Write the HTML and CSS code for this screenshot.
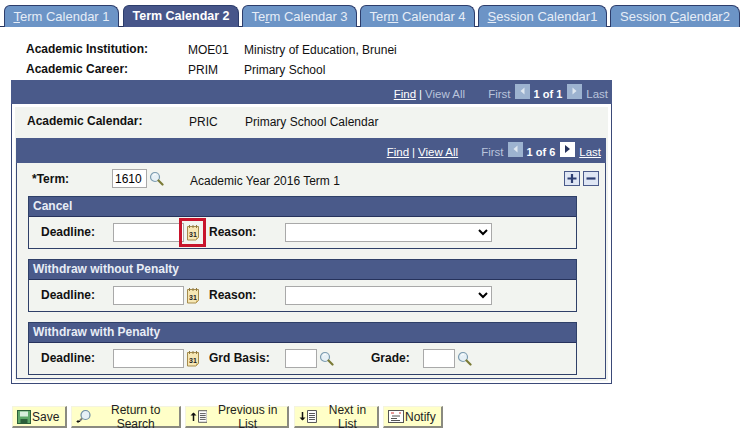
FILE: index.html
```html
<!DOCTYPE html>
<html lang="en">
<head>
    <meta charset="UTF-8">
    <meta name="viewport" content="width=device-width, initial-scale=1.0">
    <title>Term Calendar 2</title>
    <link rel="stylesheet" href="styles.css">
</head>
<body>
    <svg class="defs" width="0" height="0">
        <symbol id="ico-search" viewBox="0 0 15 15">
            <circle cx="6" cy="6" r="4.5" fill="#e6f0f6" stroke="#7d9cb0" stroke-width="1.2"/>
            <path d="M4 4.5a3 3 0 0 1 3-1.2" fill="none" stroke="#fff" stroke-width="1"/>
            <path d="M9.5 9.5l4 4" stroke="#7a7a35" stroke-width="2.2" stroke-linecap="round"/>
        </symbol>
        <symbol id="ico-cal" viewBox="0 0 14 17">
            <path d="M1.5 2.5h11v11l-2.5 2.5h-8.500z" fill="#f6e7b4" stroke="#a58b4c"/>
            <path d="M3.500 1v3M7 1v3M10.500 1v3" stroke="#8f7a42"/>
            <path d="M12.500 13.500l-2.500 2.500v-2.500z" fill="#c9ab62"/>
            <text x="7" y="12.500" text-anchor="middle" class="cal-num">31</text>
        </symbol>
        <symbol id="ico-list" viewBox="0 0 10 13">
            <path d="M.5.500h9v12h-9z" fill="#fff" stroke="#555"/>
            <path d="M2 3.500h6M2 5.500h6M2 7.500h6M2 9.500h6" stroke="#555"/>
        </symbol>
    </svg>

    <div class="tabs">
        <a class="tab t1"><u>T</u>erm Calendar 1</a>
        <a class="tab t2 active">Term Calendar 2</a>
        <a class="tab t3">Te<u>r</u>m Calendar 3</a>
        <a class="tab t4">Ter<u>m</u> Calendar 4</a>
        <a class="tab t5"><u>S</u>ession Calendar1</a>
        <a class="tab t6">Session <u>C</u>alendar2</a>
    </div>

    <div class="info">
        <div class="info-row"><b>Academic Institution:</b><span class="code">MOE01</span><span>Ministry of Education, Brunei</span></div>
        <div class="info-row"><b>Academic Career:</b><span class="code">PRIM</span><span>Primary School</span></div>
    </div>

    <div class="outer">
        <div class="nav-bar">
            <a class="link">Find</a><span class="sep">|</span><span class="off">View All</span>
            <span class="off first">First</span>
            <svg class="arrow" width="15" height="15"><rect width="15" height="15" fill="#9db3d0"/><path d="M9.500 3.500v7l-4-3.500z" fill="#dfe7f0"/></svg>
            <b class="count">1 of 1</b>
            <svg class="arrow" width="15" height="15"><rect width="15" height="15" fill="#9db3d0"/><path d="M5.500 3.500v7l4-3.500z" fill="#dfe7f0"/></svg>
            <span class="off">Last</span>
        </div>

        <div class="panel">
            <div class="info-row cal-row"><b>Academic Calendar:</b><span class="code">PRIC</span><span>Primary School Calendar</span></div>

            <div class="inner">
                <div class="nav-bar">
                    <a class="link">Find</a><span class="sep">|</span><a class="link">View All</a>
                    <span class="off first">First</span>
                    <svg class="arrow" width="15" height="15"><rect width="15" height="15" fill="#9db3d0"/><path d="M9.500 3.500v7l-4-3.500z" fill="#dfe7f0"/></svg>
                    <b class="count">1 of 6</b>
                    <svg class="arrow" width="15" height="15"><rect width="15" height="15" fill="#fff"/><path d="M5 3v8l5-4z" fill="#26325c"/></svg>
                    <a class="link">Last</a>
                </div>

                <div class="term-row">
                    <b class="term-label">*Term:</b>
                    <input class="field term-field" type="text" value="1610">
                    <svg class="ico"><use href="#ico-search"/></svg>
                    <span class="term-desc">Academic Year 2016 Term 1</span>
                    <span class="row-btns">
                        <svg width="16" height="15"><rect x=".5" y=".5" width="15" height="14" fill="#dfe6f4" stroke="#4a5a8a"/><path d="M8 3v9M3.500 7.500h9" stroke="#2e3f73" stroke-width="2.200"/></svg>
                        <svg width="16" height="15"><rect x=".5" y=".5" width="15" height="14" fill="#dfe6f4" stroke="#4a5a8a"/><path d="M3.500 7.500h9" stroke="#2e3f73" stroke-width="2.200"/></svg>
                    </span>
                </div>

                <section class="group">
                    <h2>Cancel</h2>
                    <div class="group-row">
                        <b class="lbl">Deadline:</b>
                        <input class="field date" type="text">
                        <span class="cal-cell">
                            <svg class="ico-cal"><use href="#ico-cal"/></svg>
                            <span class="highlight"></span>
                        </span>
                        <b class="lbl2">Reason:</b>
                        <select class="field reason"></select>
                    </div>
                </section>

                <section class="group">
                    <h2>Withdraw without Penalty</h2>
                    <div class="group-row">
                        <b class="lbl">Deadline:</b>
                        <input class="field date" type="text">
                        <span class="cal-cell"><svg class="ico-cal"><use href="#ico-cal"/></svg></span>
                        <b class="lbl2">Reason:</b>
                        <select class="field reason"></select>
                    </div>
                </section>

                <section class="group">
                    <h2>Withdraw with Penalty</h2>
                    <div class="group-row">
                        <b class="lbl">Deadline:</b>
                        <input class="field date" type="text">
                        <span class="cal-cell"><svg class="ico-cal"><use href="#ico-cal"/></svg></span>
                        <b class="lbl2">Grd Basis:</b>
                        <input class="field short" type="text">
                        <svg class="ico"><use href="#ico-search"/></svg>
                        <b class="lbl3">Grade:</b>
                        <input class="field short" type="text">
                        <svg class="ico"><use href="#ico-search"/></svg>
                    </div>
                </section>
            </div>
        </div>
    </div>

    <div class="toolbar">
        <button class="btn b-save">
            <svg width="14" height="14"><rect x=".5" y=".5" width="13" height="13" fill="#5fa86a" stroke="#2c5f3a"/><rect x="3" y="1.500" width="8" height="5" fill="#d9eedd"/><rect x="3.500" y="9" width="7" height="4" fill="#2c5f3a"/></svg>Save
        </button>
        <button class="btn b-return">
            <svg width="16" height="15"><circle cx="9.500" cy="6" r="4.500" fill="#e6f0f6" stroke="#6d8da3" stroke-width="1.200"/><path d="M6 9.500l-2.500 2.500" stroke="#777" stroke-width="1.800"/><path d="M1 12.500h3M2.500 11l-1.500 1.500 1.500 1.500" fill="none" stroke="#111"/></svg>Return to Search
        </button>
        <button class="btn b-prev">
            <svg width="7" height="13"><path d="M3.500 3v8" stroke="#111" stroke-width="1.500"/><path d="M.5 5.500l3-3 3 3z" fill="#111"/></svg>
            <svg width="10" height="13"><use href="#ico-list"/></svg>Previous in List
        </button>
        <button class="btn b-next">
            <svg width="7" height="13"><path d="M3.500 2v8" stroke="#111" stroke-width="1.500"/><path d="M.5 7.500l3 3 3-3z" fill="#111"/></svg>
            <svg width="10" height="13"><use href="#ico-list"/></svg>Next in List
        </button>
        <button class="btn b-notify">
            <svg width="16" height="13"><rect x=".5" y=".5" width="15" height="12" fill="#fff" stroke="#555"/><path d="M3 3h3M11 3h2" stroke="#c33"/><path d="M4 6h8M3 8.500h6M3 10.500h9" stroke="#555"/></svg>Notify
        </button>
    </div>
</body>
</html>
```

FILE: styles.css
```css
* {
    margin: 0;
    padding: 0;
    box-sizing: border-box;
}

body {
    font-family: "Liberation Sans", Arial, sans-serif;
    font-size: 12px;
    color: #111;
    background: #fff;
    width: 746px;
    height: 433px;
    overflow: hidden;
}

.defs {
    position: absolute;
}

.cal-num {
    font-family: "Liberation Sans", sans-serif;
    font-size: 7px;
    font-weight: bold;
    fill: #222;
}

/* tabs */
.tabs {
    display: flex;
    height: 27px;
    padding: 5px 0 0 4px;
    border-bottom: 1px solid #26325c;
    margin-right: 6px;
}

.tab {
    height: 22px;
    padding-top: 3px;
    text-align: center;
    font-size: 13px;
    color: #e6edf7;
    background: #6c94c6;
    border: 1px solid #2d3d6b;
    border-bottom: none;
    border-radius: 6px 8px 0 0;
}

.tab.active {
    color: #fff;
    font-weight: bold;
    font-size: 12.5px;
    background: #47568a;
}

.t1 { width: 115px; margin-right: 4px; }
.t2 { width: 116px; margin-right: 3px; }
.t3 { width: 115px; margin-right: 3px; }
.t4 { width: 115px; margin-right: 3px; }
.t5 { width: 129px; margin-right: 3px; }
.t6 { width: 130px; }

/* header info */
.info {
    padding: 16px 0 0 26px;
    height: 53px;
}

.info-row {
    display: flex;
    height: 20px;
    line-height: 15px;
}

.info-row b {
    width: 162px;
    margin-top: -1px;
}

.info-row .code {
    width: 56px;
}

/* panels */
.outer {
    width: 601px;
    height: 304px;
    margin-left: 11px;
    border: 1px solid #3b4a78;
    border-top: none;
}

.nav-bar {
    display: flex;
    align-items: center;
    justify-content: flex-end;
    height: 24px;
    padding: 3px 4px 0 0;
    background: #4a5a8a;
    color: #fff;
    font-size: 11.500px;
}

.outer > .nav-bar {
    margin: 0 -1px;
}

.link {
    color: #fff;
    text-decoration: underline;
}

.sep {
    margin: 0 3px;
}

.off {
    color: #b9c4dc;
}

.first {
    margin-left: 23px;
}

.arrow {
    margin: -5px 4px 0 4px;
}

.count {
    font-size: 11px;
    margin-right: 1px;
}

.panel {
    height: 274px;
    margin: 3px 3px 0 3px;
    padding-left: 1px;
    background: #f2f4f0;
}

.cal-row {
    height: 31px;
    padding: 8px 0 0 11px;
}

.cal-row b {
    width: 162px;
}

.inner {
    width: 590px;
    height: 241px;
    background: #f2f4f0;
    border: 1px solid #3b4a78;
    border-top: none;
}

.inner > .nav-bar {
    height: 25px;
    margin: 0 -1px;
    padding-right: 5px;
}

.term-row {
    display: flex;
    align-items: center;
    height: 19px;
    margin-top: 6px;
    padding-left: 15px;
    position: relative;
}

.term-label {
    width: 80px;
}

.field {
    height: 19px;
    border: 1px solid #a9a9a9;
    background: #fff;
    font: 12px "Liberation Sans", Arial, sans-serif;
}

.term-field {
    width: 35px;
    padding-left: 2px;
}

.ico {
    width: 15px;
    height: 15px;
    margin-left: 2px;
}

.term-desc {
    margin-left: 26px;
    padding-top: 4px;
}

.row-btns {
    display: flex;
    gap: 3px;
    margin-left: auto;
    margin-right: 6px;
    margin-top: -1px;
}

/* groups */
.group {
    width: 549px;
    height: 53px;
    margin: 8px 0 10px 11px;
    border: 1px solid #2f4068;
}

.group h2 {
    height: 20px;
    padding: 2px 0 0 4px;
    font-size: 12px;
    line-height: 15px;
    color: #e8edf6;
    background: #4a5a8a;
    border-bottom: 1px solid #26325c;
}

.group-row {
    display: flex;
    align-items: center;
    height: 30px;
    padding-left: 12px;
}

.lbl {
    width: 72px;
}

.date {
    width: 71px;
}

.cal-cell {
    display: flex;
    justify-content: flex-start;
    width: 25px;
    padding-left: 2px;
    position: relative;
}

.ico-cal {
    width: 14px;
    height: 17px;
}

.highlight {
    position: absolute;
    left: -5px;
    top: -6px;
    width: 27px;
    height: 29px;
    border: 3px solid #c8142c;
}

.lbl2 {
    width: 76px;
}

.reason {
    width: 207px;
}

.short {
    width: 32px;
}

.lbl3 {
    width: 52px;
    margin-left: 37px;
}

/* buttons */
.toolbar {
    display: flex;
    margin: 22px 0 0 12px;
}

.btn {
    display: flex;
    align-items: center;
    gap: 1px;
    height: 22px;
    padding-left: 4px;
    font: 12px "Liberation Sans", Arial, sans-serif;
    color: #222;
    background: #ffffc8;
    border: none;
    border-top: 1px solid #f4f4e0;
    border-left: 1px solid #f4f4e0;
    border-right: 2px solid #8a8a80;
    border-bottom: 2px solid #8a8a80;
}

.b-save { width: 55px; margin-right: 4px; }
.b-return { width: 110px; margin-right: 4px; }
.b-prev { width: 104px; margin-right: 5px; }
.b-next { width: 85px; margin-right: 4px; }
.b-notify { width: 60px; }
```
